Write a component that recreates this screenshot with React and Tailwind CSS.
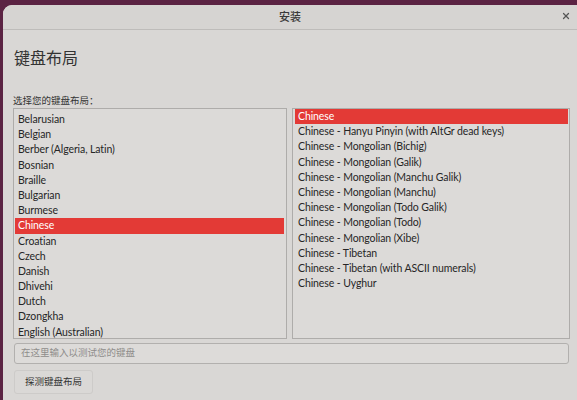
import { X } from 'lucide-react';

const layouts = [
  'Belarusian',
  'Belgian',
  'Berber (Algeria, Latin)',
  'Bosnian',
  'Braille',
  'Bulgarian',
  'Burmese',
  'Chinese',
  'Croatian',
  'Czech',
  'Danish',
  'Dhivehi',
  'Dutch',
  'Dzongkha',
  'English (Australian)',
];

const variants = [
  'Chinese',
  'Chinese - Hanyu Pinyin (with AltGr dead keys)',
  'Chinese - Mongolian (Bichig)',
  'Chinese - Mongolian (Galik)',
  'Chinese - Mongolian (Manchu Galik)',
  'Chinese - Mongolian (Manchu)',
  'Chinese - Mongolian (Todo Galik)',
  'Chinese - Mongolian (Todo)',
  'Chinese - Mongolian (Xibe)',
  'Chinese - Tibetan',
  'Chinese - Tibetan (with ASCII numerals)',
  'Chinese - Uyghur',
];

const Row = ({ label, selected }) => (
  <div
    className={`h-[15.2px] leading-[15.2px] px-[3px] whitespace-nowrap ${
      selected ? 'bg-[#e33a36] text-white' : 'text-[#262626]'
    }`}
  >
    {label}
  </div>
);

const App = () => {
  return (
    <div
      className="w-[577px] h-[400px] overflow-hidden bg-[#5b2343] pl-[3px] pt-[5px]"
      style={{ fontFamily: '"Lato", "Noto Sans CJK SC", sans-serif' }}
    >
      <div className="h-full rounded-tl-[9px] bg-[#d9d7d5] flex flex-col">
        {/* title bar */}
        <div className="relative h-[25px] shrink-0 flex items-center justify-center border-b border-[#bebcba] bg-[#d6d4d2] rounded-tl-[9px]">
          <span className="text-[11px] text-[#3a3a3a] font-medium">安装</span>
          <X className="absolute right-[6px] top-[6px] w-[10px] h-[10px] text-[#555]" strokeWidth={3} />
        </div>

        <div className="flex flex-col pl-[10px] pr-[7px]">
          <h1 className="mt-[16px] h-[24px] leading-[24px] text-[16px] text-[#333] pl-[1px]">键盘布局</h1>

          <div className="mt-[24px] h-[14px] leading-[14px] text-[9.5px] text-[#333]">选择您的键盘布局：</div>

          <div className="flex gap-[5px] h-[231px] text-[10.5px] tracking-[-0.1px]">
            <div className="w-[274px] border border-[#aeacaa] bg-[#dcdad8] pt-[3px] pl-[1px] pr-[2px] overflow-hidden">
              {layouts.map((l) => (
                <Row key={l} label={l} selected={l === 'Chinese'} />
              ))}
            </div>
            <div className="flex-1 border border-[#aeacaa] bg-[#dcdad8] pl-[2px] pr-[1px] overflow-hidden">
              {variants.map((v, i) => (
                <Row key={v} label={v} selected={i === 0} />
              ))}
            </div>
          </div>

          <div className="mt-[4px] h-[21px] border border-[#b2b0ae] rounded-[3px] bg-[#dddbd9] flex items-center px-[6px] mx-[1px]">
            <span className="text-[9.5px] text-[#8f8d8b]">在这里输入以测试您的键盘</span>
          </div>

          <div className="mt-[6px] flex">
            <button className="h-[24px] px-[10px] ml-[1px] border border-[#cdcbc9] rounded-[3px] bg-[#dad8d6] text-[9.5px] text-[#333]">
              探测键盘布局
            </button>
          </div>
        </div>
      </div>
    </div>
  );
};

export default App;
